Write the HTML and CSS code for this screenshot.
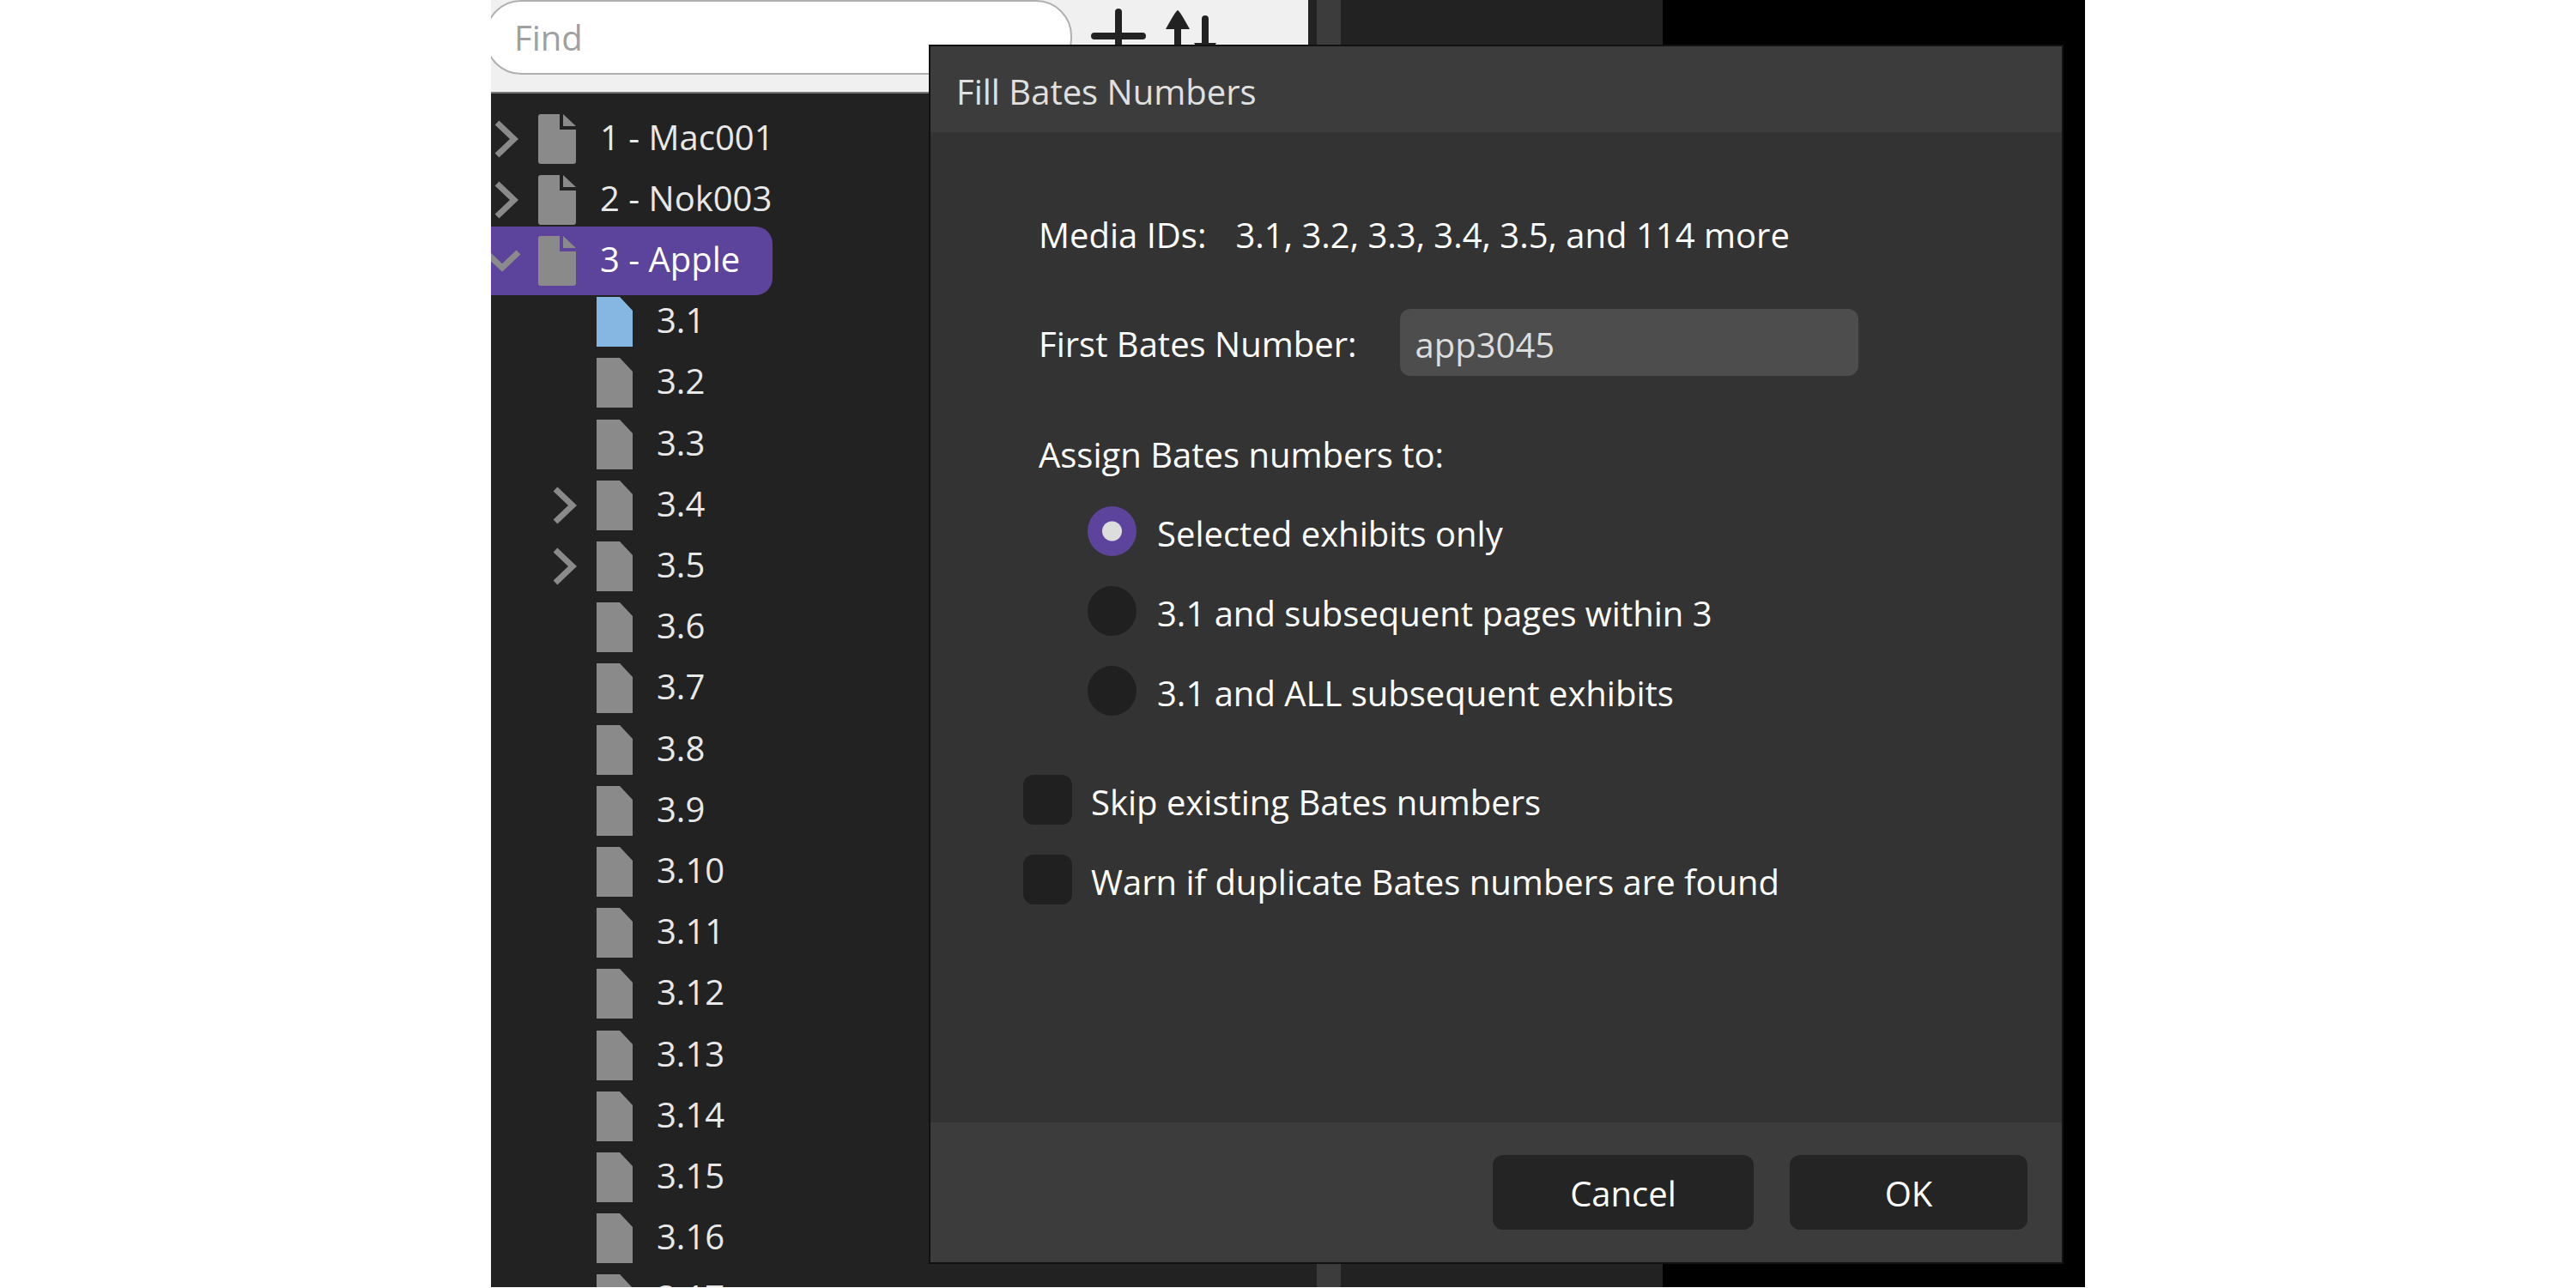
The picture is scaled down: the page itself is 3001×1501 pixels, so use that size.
FILE: index.html
```html
<!DOCTYPE html>
<html lang="en">
<head>
<meta charset="utf-8">
<title>Fill Bates Numbers</title>
<link rel="stylesheet" href="styles.css">
</head>
<body>
<svg class="symbols" aria-hidden="true">
  <symbol id="doc" viewBox="0 0 44 58"><path d="M3 0H25V18H44V55Q44 58 41 58H3Q0 58 0 55V3Q0 0 3 0Z"/><path d="M29 0L44 14H29Z"/></symbol>
  <symbol id="page" viewBox="0 0 42 58"><path d="M0 0H27L42 16V58H0Z"/></symbol>
  <symbol id="chevron" viewBox="0 0 28 44"><path d="M3 3L23 22L3 41" fill="none" stroke="currentColor" stroke-width="7"/></symbol>
  <symbol id="chevron-down" viewBox="0 0 44 28"><path d="M3 4L22 22L41 4" fill="none" stroke="currentColor" stroke-width="7"/></symbol>
</svg>
<div class="app">
  <aside class="sidebar">
    <div class="toolbar">
      <input class="search" type="search" placeholder="Find" aria-label="Find">
      <button class="tool" type="button" aria-label="Add"><svg width="64" height="64" viewBox="0 0 64 64"><path d="M4 32H60M32 4V60" stroke="#222" stroke-width="8" stroke-linecap="round"/></svg></button>
      <button class="tool" type="button" aria-label="Sort"><svg width="64" height="64" viewBox="0 0 64 64"><g stroke="#222" stroke-width="8" stroke-linecap="round"><path d="M15 22V56M47 12V46"/></g><path d="M15 2Q17 2 29 24H1Q13 2 15 2ZM34 40H60L47 61Z" fill="#222"/></svg></button>
    </div>
    <ul class="tree">
      <li class="node"><svg class="chevron"><use href="#chevron"/></svg><svg class="doc"><use href="#doc"/></svg><span>1 - Mac001</span></li>
      <li class="node"><svg class="chevron"><use href="#chevron"/></svg><svg class="doc"><use href="#doc"/></svg><span>2 - Nok003</span></li>
      <li class="node selected"><svg class="chevron open"><use href="#chevron-down"/></svg><svg class="doc"><use href="#doc"/></svg><span>3 - Apple</span></li>
      <li class="node child current"><i class="chevron"></i><svg class="page"><use href="#page"/></svg><span>3.1</span></li>
      <li class="node child"><i class="chevron"></i><svg class="page"><use href="#page"/></svg><span>3.2</span></li>
      <li class="node child"><i class="chevron"></i><svg class="page"><use href="#page"/></svg><span>3.3</span></li>
      <li class="node child"><svg class="chevron"><use href="#chevron"/></svg><svg class="page"><use href="#page"/></svg><span>3.4</span></li>
      <li class="node child"><svg class="chevron"><use href="#chevron"/></svg><svg class="page"><use href="#page"/></svg><span>3.5</span></li>
      <li class="node child"><i class="chevron"></i><svg class="page"><use href="#page"/></svg><span>3.6</span></li>
      <li class="node child"><i class="chevron"></i><svg class="page"><use href="#page"/></svg><span>3.7</span></li>
      <li class="node child"><i class="chevron"></i><svg class="page"><use href="#page"/></svg><span>3.8</span></li>
      <li class="node child"><i class="chevron"></i><svg class="page"><use href="#page"/></svg><span>3.9</span></li>
      <li class="node child"><i class="chevron"></i><svg class="page"><use href="#page"/></svg><span>3.10</span></li>
      <li class="node child"><i class="chevron"></i><svg class="page"><use href="#page"/></svg><span>3.11</span></li>
      <li class="node child"><i class="chevron"></i><svg class="page"><use href="#page"/></svg><span>3.12</span></li>
      <li class="node child"><i class="chevron"></i><svg class="page"><use href="#page"/></svg><span>3.13</span></li>
      <li class="node child"><i class="chevron"></i><svg class="page"><use href="#page"/></svg><span>3.14</span></li>
      <li class="node child"><i class="chevron"></i><svg class="page"><use href="#page"/></svg><span>3.15</span></li>
      <li class="node child"><i class="chevron"></i><svg class="page"><use href="#page"/></svg><span>3.16</span></li>
      <li class="node child"><i class="chevron"></i><svg class="page"><use href="#page"/></svg><span>3.17</span></li>
    </ul>
  </aside>
  <div class="splitter"></div>
  <main class="panel"></main>
  <div class="viewer"></div>

  <form class="dialog" role="dialog" aria-labelledby="dialog-title">
    <h1 class="dialog-title" id="dialog-title">Fill Bates Numbers</h1>
    <div class="dialog-body">
      <p class="line media"><span>Media IDs:</span><span>3.1, 3.2, 3.3, 3.4, 3.5, and 114 more</span></p>
      <div class="field">
        <label for="first">First Bates Number:</label>
        <input id="first" class="text" type="text" value="app3045">
      </div>
      <p class="line" id="assign">Assign Bates numbers to:</p>
      <div class="choices radios" role="radiogroup" aria-labelledby="assign">
        <label class="choice"><input type="radio" name="scope" checked><span>Selected exhibits only</span></label>
        <label class="choice"><input type="radio" name="scope"><span>3.1 and subsequent pages within 3</span></label>
        <label class="choice"><input type="radio" name="scope"><span>3.1 and ALL subsequent exhibits</span></label>
      </div>
      <div class="choices checks">
        <label class="choice"><input type="checkbox"><span>Skip existing Bates numbers</span></label>
        <label class="choice"><input type="checkbox"><span>Warn if duplicate Bates numbers are found</span></label>
      </div>
    </div>
    <div class="dialog-footer">
      <button class="button cancel" type="button">Cancel</button>
      <button class="button ok" type="button">OK</button>
    </div>
  </form>
</div>
</body>
</html>
```
FILE: styles.css
```css
* { box-sizing: border-box; }

body {
  margin: 0;
  background: #fff;
  font: 40px/54px "Open Sans", "Noto Sans", sans-serif;
  color: #fff;
}

.symbols { position: absolute; width: 0; height: 0; }

.app {
  position: relative;
  display: flex;
  max-width: 1857px;
  height: calc(100vh - 1px);
  margin: 0 auto;
  overflow: hidden;
  background: #222;
}

/* Sidebar */
.sidebar {
  display: flex;
  flex-direction: column;
  width: 952px;
  flex: none;
}

.toolbar {
  display: flex;
  align-items: flex-start;
  gap: 22px;
  height: 109px;
  flex: none;
  background: #f0f0f0;
  border-bottom: 2px solid #777;
}

.search {
  flex: none;
  width: 684px;
  height: 87px;
  margin-left: -7px;
  padding: 0 32px;
  border: 2px solid #b0b0b0;
  border-radius: 42px;
  background: #fff;
  font: inherit;
  color: #222;
}
.search::placeholder { color: #a0a0a0; }

.tool {
  display: block;
  padding: 0;
  margin-top: 10px;
  border: 0;
  background: none;
}
.tool svg { display: block; }

.tree {
  display: grid;
  grid-template-rows: repeat(20, 1fr);
  flex: none;
  height: 1424px;
  margin: 17px 0 0;
  padding: 0;
  list-style: none;
  color: #e8e8e8;
}

.node {
  display: flex;
  align-items: center;
  justify-self: start;
  padding: 0 38px 0 4px;
}
.node span { padding-bottom: 4px; }
.child { padding-left: 72px; }

.chevron { width: 28px; height: 44px; margin-right: 23px; color: #8a8a8a; flex: none; }
.chevron.open { width: 44px; height: 28px; margin: 0 20px 0 -13px; }
.doc { width: 44px; height: 58px; margin-right: 28px; fill: #8a8a8a; flex: none; }
.page { width: 42px; height: 58px; margin-right: 28px; fill: #8a8a8a; flex: none; }
.current .page { fill: #86b7e3; }

.selected {
  margin: -4px 0 -4px;
  border-radius: 0 20px 20px 0;
  background: #5c439b;
  color: #fff;
}

/* Panes behind the dialog */
.splitter { width: 28px; margin-left: 10px; background: #3c3c3c; flex: none; }
.panel { width: 375px; flex: none; }
.viewer { flex: 1; background: #000; }

/* Dialog */
.dialog {
  position: absolute;
  inset: 52px 25px 27px 510px;
  display: flex;
  flex-direction: column;
  border: 2px solid #111;
  background: #333;
}

.dialog-title {
  margin: 0;
  padding: 26px 30px 20px;
  background: #3c3c3c;
  color: #e0e0e0;
  font-size: 40px;
  font-weight: 400;
}

.dialog-body { flex: 1; padding: 93px 126px 0; }

.line { margin: 0; }
.media { display: flex; gap: 34px; }

.field {
  display: flex;
  align-items: center;
  gap: 50px;
  margin: 59px 0 65px;
}
.field label { padding-top: 4px; }

.text {
  width: 534px;
  height: 78px;
  padding: 4px 18px 0;
  border: 0;
  border-radius: 12px;
  background: #4d4d4d;
  color: #ddd;
  font: inherit;
}

.choices { display: flex; flex-direction: column; gap: 35px; }
.radios { margin: 33px 0 0 57px; }
.checks { margin: 69px 0 0 -18px; }

.choice { display: flex; align-items: center; height: 58px; }
.choice span { padding-top: 6px; }
.choice input {
  appearance: none;
  width: 57px;
  height: 58px;
  margin: 0 22px 0 0;
  border-radius: 12px;
  background: #202020;
}
.choice input[type="radio"] { margin-right: 24px; border-radius: 50%; }
.choice input[type="radio"]:checked {
  background: radial-gradient(circle, #ddd 0 11px, #5c439b 12px);
}
.choice input[type="checkbox"]:checked { background: #5c439b; }

.dialog-footer {
  display: flex;
  justify-content: flex-end;
  gap: 42px;
  padding: 38px 40px;
  background: #3c3c3c;
}

.button {
  height: 87px;
  padding: 2px 0 0;
  border: 0;
  border-radius: 12px;
  background: #242424;
  color: #fff;
  font: inherit;
}
.cancel { width: 304px; }
.ok { width: 277px; }
```
